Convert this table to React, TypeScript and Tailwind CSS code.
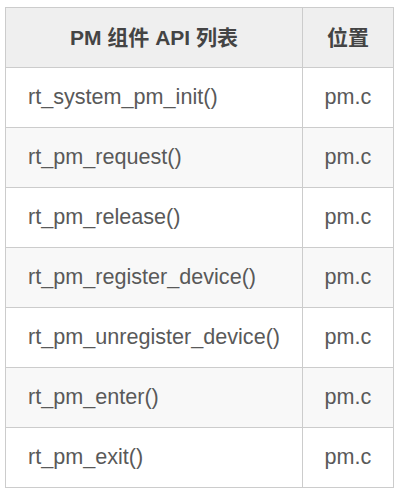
import React from "react";

const rows = [
  "rt_system_pm_init()",
  "rt_pm_request()",
  "rt_pm_release()",
  "rt_pm_register_device()",
  "rt_pm_unregister_device()",
  "rt_pm_enter()",
  "rt_pm_exit()",
];

const App = () => {
  return (
    <div
      className="bg-white w-[402px] h-[496px] pt-[7px] pl-[5px]"
      style={{ fontFamily: '"Liberation Sans", "Noto Sans CJK SC", sans-serif' }}
    >
      <table className="border-collapse text-[21.6px] text-[#595959]">
        <thead>
          <tr className="bg-[#efefef] h-[60px]">
            <th className="border border-[#ccc] w-[297px] font-bold text-center p-0 text-[21px] text-[#444]">PM 组件 API 列表</th>
            <th className="border border-[#ccc] w-[91px] font-bold text-center p-0 text-[21px] text-[#444]">位置</th>
          </tr>
        </thead>
        <tbody>
          {rows.map((r, i) => (
            <tr key={r} className={`h-[60px] ${i % 2 === 1 ? "bg-[#f8f8f8]" : "bg-white"}`}>
              <td className="border border-[#ccc] pl-[22px] text-left p-0">{r}</td>
              <td className="border border-[#ccc] text-center p-0">pm.c</td>
            </tr>
          ))}
        </tbody>
      </table>
    </div>
  );
};

export default App;
